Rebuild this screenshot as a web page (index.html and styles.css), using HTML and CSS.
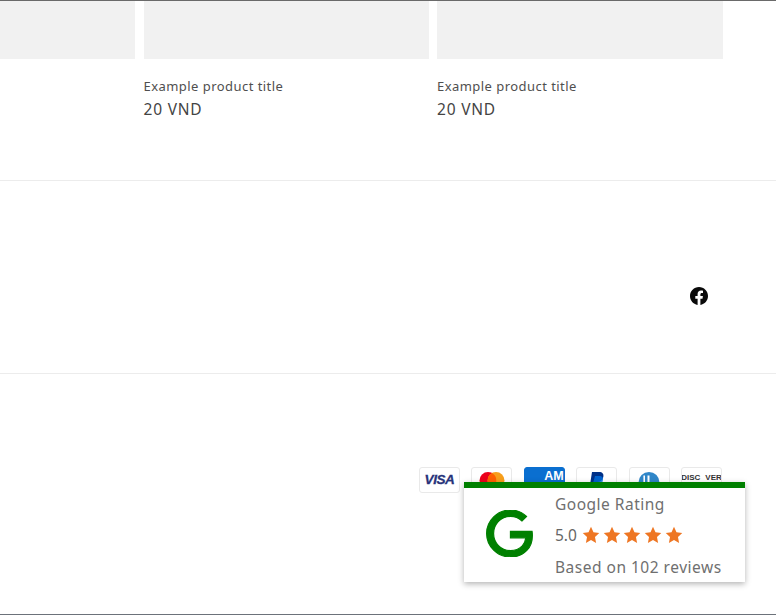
FILE: index.html
```html
<!DOCTYPE html>
<html lang="en">
<head>
<meta charset="utf-8">
<title>Footer</title>
<link rel="stylesheet" href="styles.css">
</head>
<body>
<div class="page">
  <section class="products">
    <div class="card"><div class="thumb"></div></div>
    <div class="card">
      <div class="thumb"></div>
      <p class="title">Example product title</p>
      <p class="price">20 VND</p>
    </div>
    <div class="card">
      <div class="thumb"></div>
      <p class="title">Example product title</p>
      <p class="price">20 VND</p>
    </div>
  </section>
  <section class="social">
    <svg class="fb" viewBox="0 0 24 24" aria-label="Facebook"><path d="M24 12.073c0-6.627-5.373-12-12-12s-12 5.373-12 12c0 5.990 4.388 10.954 10.125 11.854v-8.385H7.078v-3.470h3.047V9.430c0-3.007 1.792-4.669 4.533-4.669 1.312 0 2.686.235 2.686.235v2.953H15.830c-1.491 0-1.956.925-1.956 1.874v2.250h3.328l-.532 3.470h-2.796v8.385C19.612 23.027 24 18.062 24 12.073z"/></svg>
  </section>
  <section class="payments">
    <div class="pay"><span class="visa">VISA</span></div>
    <div class="pay">
      <svg class="pay-svg" viewBox="0 0 41 26"><circle cx="17" cy="13.500" r="8.500" fill="#eb001b"/><circle cx="25" cy="13.500" r="8.500" fill="#f79e1b"/><path d="M21 6.100a8.500 8.500 0 0 1 0 14.800a8.500 8.500 0 0 1 0-14.800z" fill="#ff5f00"/></svg>
    </div>
    <div class="pay amex"><span class="amex-text">AM</span></div>
    <div class="pay">
      <svg class="pay-svg" viewBox="0 0 41 26"><path d="M16 5h7c3.500 0 5 2 4.300 5-.7 3.400-3 5-6 5h-2.300l-1 6h-4.500z" fill="#003087"/><path d="M19 9h5.500c2.500.6 3 2.600 2.300 5-.8 3-3 4.500-6 4.500h-1.500l-.8 4.500h-3.500z" fill="#0070e0" opacity=".8"/></svg>
    </div>
    <div class="pay">
      <svg class="pay-svg" viewBox="0 0 41 26"><circle cx="20" cy="15.500" r="10.500" fill="#3086c8"/><path d="M16 8.500v14h-1.600v-14zM20.500 8.500h-2v14h2z" fill="#fff"/></svg>
    </div>
    <div class="pay"><span class="discover">DISC<i class="o"></i>VER</span></div>
  </section>
  <aside class="badge">
    <svg class="g" viewBox="0 0 24 24" aria-label="Google"><path d="M12.480 10.920v3.280h7.840c-.240 1.840-.853 3.187-1.787 4.133-1.147 1.147-2.933 2.400-6.053 2.400-4.827 0-8.600-3.893-8.600-8.720s3.773-8.720 8.600-8.720c2.600 0 4.507 1.027 5.907 2.347l2.307-2.307C18.747 1.440 16.133 0 12.480 0 5.867 0 .307 5.387.307 12s5.560 12 12.173 12c3.573 0 6.267-1.173 8.373-3.360 2.160-2.160 2.840-5.213 2.840-7.667 0-.760-.053-1.467-.173-2.053H12.480z"/></svg>
    <div class="info">
      <div class="brand">Google Rating</div>
      <div class="score">
        <span>5.0</span>
        <span class="stars">
          <svg class="star" viewBox="0 0 24 24"><path d="M12 1l3.300 7.300 7.700.9-5.700 5.400 1.500 7.900L12 18.600l-6.800 3.900 1.500-7.900L1 9.200l7.700-.9z"/></svg>
          <svg class="star" viewBox="0 0 24 24"><path d="M12 1l3.300 7.300 7.700.9-5.700 5.400 1.500 7.900L12 18.600l-6.800 3.900 1.500-7.900L1 9.200l7.700-.9z"/></svg>
          <svg class="star" viewBox="0 0 24 24"><path d="M12 1l3.300 7.300 7.700.9-5.700 5.400 1.500 7.900L12 18.600l-6.800 3.900 1.500-7.900L1 9.200l7.700-.9z"/></svg>
          <svg class="star" viewBox="0 0 24 24"><path d="M12 1l3.300 7.300 7.700.9-5.700 5.400 1.500 7.900L12 18.600l-6.800 3.900 1.500-7.900L1 9.200l7.700-.9z"/></svg>
          <svg class="star" viewBox="0 0 24 24"><path d="M12 1l3.300 7.300 7.700.9-5.700 5.400 1.500 7.900L12 18.600l-6.800 3.900 1.500-7.900L1 9.200l7.700-.9z"/></svg>
        </span>
      </div>
      <div class="reviews">Based on 102 reviews</div>
    </div>
  </aside>
</div>
</body>
</html>
```
FILE: styles.css
```css
* { box-sizing: border-box; }
html, body { margin: 0; padding: 0; background: #fff; }
body { font-family: "Noto Sans", "Open Sans", sans-serif; color: #4a4a4a; overflow: hidden; }
.page {
  position: relative;
  height: 615px;
  border-top: 1px solid #6a6a6a;
  border-bottom: 1px solid #6c727a;
  display: flex;
  flex-direction: column;
}
.products {
  height: 180px;
  display: grid;
  grid-template-columns: 135px 285px 285.5px;
  column-gap: 8.500px;
  align-items: start;
  border-bottom: 1px solid #ececec;
}
.thumb { height: 57.500px; background: #f1f1f1; }
.title {
  margin: 19.500px 0 0;
  font-size: 13px;
  line-height: 17px;
  letter-spacing: .45px;
  color: #4f4f4f;
}
.price {
  margin: 4px 0 0;
  font-size: 15.500px;
  line-height: 20px;
  letter-spacing: .8px;
  color: #444;
}
.social {
  height: 193px;
  border-bottom: 1px solid #ececec;
  display: flex;
  justify-content: flex-end;
  align-items: center;
  padding: 38px 68px 0 0;
}
.fb { width: 18px; height: 18px; fill: #0a0a0a; }
.payments {
  padding: 93px 54px 0 419px;
  display: grid;
  grid-template-columns: repeat(6, 41px);
  justify-content: space-between;
}
.pay {
  height: 26px;
  background: #fff;
  border: 1px solid #e9e9e9;
  border-radius: 3px;
  display: flex;
  align-items: flex-start;
  justify-content: center;
  overflow: hidden;
}
.pay-svg { width: 41px; height: 26px; flex: none; margin: -1px; }
.visa {
  margin-top: 4px;
  font: italic 700 13.500px/16px "Liberation Sans", sans-serif;
  color: #27337a;
  letter-spacing: -.4px;
  -webkit-text-stroke: .3px #27337a;
}
.amex { background: #0a6fd0; border-color: #0a6fd0; justify-content: flex-end; padding-right: 0; }
.amex-text {
  margin-top: 1px;
  font: 700 12.500px/14px "Liberation Sans", sans-serif;
  color: #fff;
}
.discover {
  margin-top: 3px;
  font: 700 8px/13px "Liberation Sans", sans-serif;
  color: #333;
  white-space: nowrap;
}
.o { display: inline-block; width: 5px; }
.badge {
  position: absolute;
  left: 464px;
  top: 481px;
  width: 281px;
  height: 100px;
  background: #fff;
  border-top: 6px solid #008000;
  box-shadow: 0 2px 6px rgba(0, 0, 0, .3);
  display: flex;
  color: #6f6f6f;
}
.g { width: 47px; height: 47px; fill: #008000; stroke: #008000; stroke-width: .6px; flex: none; margin: 22px 22px 0 22px; }
.info { display: flex; flex-direction: column; padding-top: 5px; }
.brand { font-size: 15.500px; line-height: 22px; letter-spacing: .5px; }
.score { display: flex; align-items: center; margin-top: 10px; font-size: 15.500px; line-height: 20px; color: #666; }
.stars { display: flex; margin-left: 5px; gap: 2.700px; }
.star { width: 18px; height: 18px; fill: #ee7623; display: block; }
.reviews { font-size: 15.500px; line-height: 22px; letter-spacing: .5px; margin-top: 10.500px; white-space: nowrap; }
```
